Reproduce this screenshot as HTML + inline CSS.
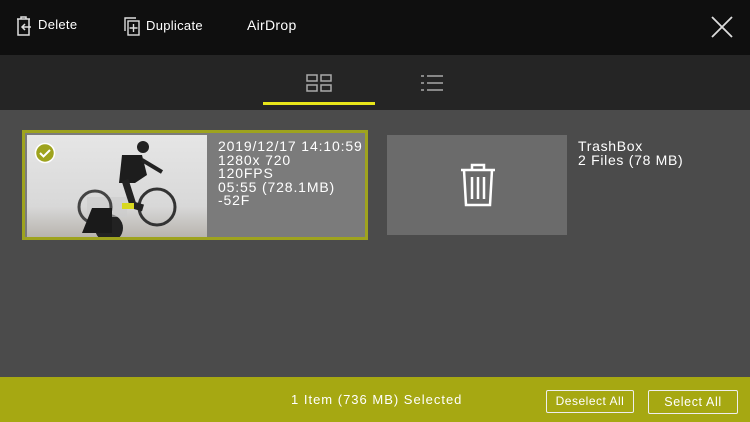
<!DOCTYPE html><html><head><style>
body{margin:0;width:750px;height:422px;overflow:hidden;background:#4b4b4b;font-family:"Liberation Sans",sans-serif;color:#fff;position:relative}
.a{position:absolute}
</style></head><body>
<div class="a" style="left:0;top:0;width:750px;height:55px;background:#0f0f0f"></div>
<svg class="a" style="left:15px;top:15px" width="20" height="22" viewBox="0 0 20 22" fill="none" stroke="#ddd" stroke-width="1.5"><path d="M2 4h13M6 4V2h5v2M3 4v16h11V4"/><path d="M16 12H7M10 9l-3 3 3 3"/></svg>
<div class="a" style="left:38px;top:17px;font-size:13px;letter-spacing:.3px">Delete</div>
<svg class="a" style="left:123px;top:16px" width="20" height="22" viewBox="0 0 20 22" fill="none" stroke="#ddd" stroke-width="1.4"><path d="M2 15V2h11"/><rect x="5" y="5" width="11" height="14"/><path d="M10.5 8v8M6.5 12h8"/></svg>
<div class="a" style="left:146px;top:18px;font-size:13px;letter-spacing:.3px">Duplicate</div>
<div class="a" style="left:247px;top:17px;font-size:14px;letter-spacing:.3px">AirDrop</div>
<svg class="a" style="left:711px;top:16px" width="22" height="22" viewBox="0 0 22 22" stroke="#ddd" stroke-width="1.8"><path d="M1 1L21 21M21 1L1 21"/></svg>
<div class="a" style="left:0;top:55px;width:750px;height:55px;background:#252525"></div>
<svg class="a" style="left:306px;top:74px" width="27" height="18" viewBox="0 0 27 18" fill="none" stroke="#aaa" stroke-width="1.5"><rect x="1" y="1" width="10" height="6"/><rect x="15" y="1" width="10" height="6"/><rect x="1" y="11" width="10" height="6"/><rect x="15" y="11" width="10" height="6"/></svg>
<div class="a" style="left:263px;top:102px;width:112px;height:3px;background:#e8e61a"></div>
<svg class="a" style="left:421px;top:74px" width="22" height="18" viewBox="0 0 22 18" stroke="#aaa" stroke-width="1.6"><path d="M0 2h3M6 2h16M0 9h3M6 9h16M0 16h3M6 16h16"/></svg>
<div class="a" style="left:22px;top:130px;width:340px;height:104px;border:3px solid #9ea31e;background:#7b7b7b"></div>
<div class="a" style="left:27px;top:135px;width:180px;height:102px;background:linear-gradient(180deg,#e6e6e6 0%,#d8d8d8 70%,#b8b4ae 100%)"></div>
<svg class="a" style="left:27px;top:135px" width="180" height="102" viewBox="0 0 180 102"><circle cx="82" cy="93" r="14" fill="#222"/><path d="M60 62h40v20H60z" fill="#ccc" opacity=".6"/><circle cx="130" cy="72" r="18" fill="none" stroke="#333" stroke-width="3"/><circle cx="68" cy="72" r="16" fill="none" stroke="#444" stroke-width="3"/><path d="M55 98l10-25h20v25z" fill="#1a1a1a"/><circle cx="116" cy="12" r="6" fill="#222"/><path d="M95 20h20l5 20-12 8H92z" fill="#1d1d1d"/><path d="M98 45l8 25 10 3" stroke="#222" stroke-width="7" fill="none"/><path d="M115 25l20 12" stroke="#222" stroke-width="4"/><rect x="95" y="68" width="12" height="6" fill="#d8d820"/></svg>
<svg class="a" style="left:34px;top:142px" width="22" height="22"><circle cx="11" cy="11" r="9.5" fill="#9ea31e" stroke="#fff" stroke-width="1.5"/><path d="M6 11l3.5 3.5L16 8" stroke="#fff" stroke-width="2" fill="none"/></svg>
<div class="a" style="left:218px;top:140px;font-size:14px;line-height:13.5px;letter-spacing:.85px">2019/12/17 14:10:59<br>1280x 720<br>120FPS<br>05:55 (728.1MB)<br>-52F</div>
<div class="a" style="left:387px;top:135px;width:180px;height:100px;background:#6b6b6b"></div>
<svg class="a" style="left:460px;top:163px" width="36" height="44" viewBox="0 0 36 44" fill="none" stroke="#fff" stroke-width="2.5"><path d="M1 7h34M12 7V2h12v5M4 7l2 35h24l2-35M12 14v22M18 14v22M24 14v22"/></svg>
<div class="a" style="left:578px;top:140px;font-size:14px;line-height:13.5px;letter-spacing:.7px">TrashBox<br>2 Files (78 MB)</div>
<div class="a" style="left:0;top:377px;width:750px;height:45px;background:#a6a812"></div>
<div class="a" style="left:291px;top:392px;font-size:13px;letter-spacing:1px">1 Item (736 MB) Selected</div>
<div class="a" style="left:546px;top:390px;width:86px;height:21px;border:1px solid #eee;border-radius:2px;font-size:12px;letter-spacing:.5px;text-align:center;line-height:21px">Deselect All</div>
<div class="a" style="left:648px;top:390px;width:88px;height:22px;border:1px solid #eee;border-radius:2px;font-size:12.5px;letter-spacing:.6px;text-align:center;line-height:22px">Select All</div>
</body></html>
